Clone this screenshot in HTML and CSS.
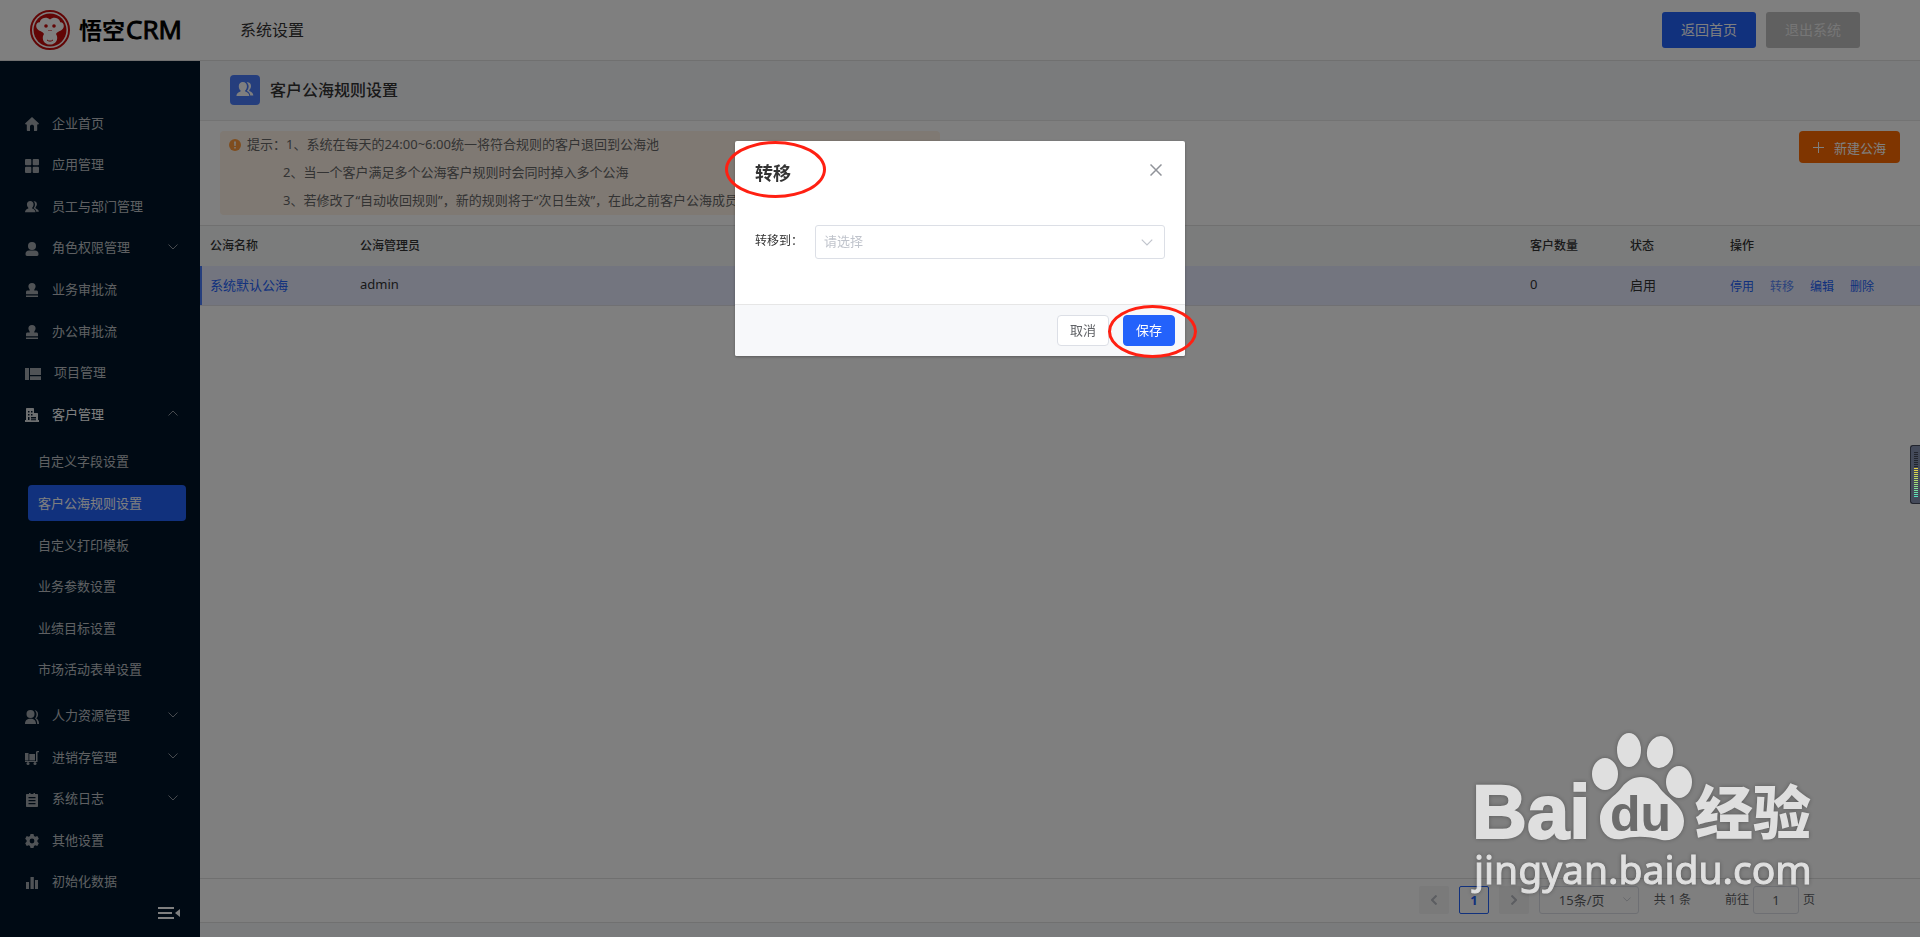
FILE: index.html
```html
<!DOCTYPE html>
<html lang="zh-CN">

<head>
    <meta charset="UTF-8">
    <title>系统设置 - 悟空CRM</title>
    <meta name="viewport" content="width=device-width, initial-scale=1.0">
    <link rel="stylesheet" href="styles.css">
</head>

<body>
    <!-- Shared icons -->
    <svg class="sprite" aria-hidden="true">
        <symbol id="i-down" viewBox="0 0 10 6"><path d="M.5.5 5 5 9.500.5" fill="none" stroke="currentColor"/></symbol>
        <symbol id="i-users" viewBox="0 0 16 14">
            <path d="M6 0c2.300 0 3.800 1.600 3.800 3.900 0 1.700-.6 3-1.600 3.900v1c2.400.8 3.800 2 3.800 4.200H0c0-2.200 1.400-3.400 3.800-4.200v-1C2.800 6.900 2.200 5.600 2.200 3.900 2.200 1.600 3.700 0 6 0z"/>
            <path d="M9.600.4c2.400-.4 4 1.100 4 3.300 0 1.600-.7 2.900-1.600 3.600v1.100c2.200.9 3.700 2 3.800 4.100h-2.900c-.2-2-1.200-3.200-3-4.100V8c1-1 1.500-2.300 1.500-4 0-1.500-.7-2.800-1.800-3.600z"/>
        </symbol>
        <symbol id="i-stamp" viewBox="0 0 14 14"><path d="M7 0a3.600 3.600 0 0 1 3.600 3.600c0 1.600-1.400 2.300-1.400 3.900h2.300c.9 0 1.500.6 1.500 1.500v2.300H1V9c0-.9.6-1.500 1.500-1.500h2.300c0-1.600-1.400-2.300-1.400-3.900A3.600 3.600 0 0 1 7 0zM1 12.600h12V14H1z"/></symbol>
    </svg>

    <div class="app">
        <header class="topbar">
            <a class="logo" href="#">
                <svg width="40" height="40" viewBox="0 0 40 40">
                    <circle cx="20" cy="20" r="19" fill="#fff" stroke="#c40d0d" stroke-width="2"/>
                    <circle cx="20" cy="20" r="16.500" fill="#c40d0d"/>
                    <path d="M20 9.500c2-1.800 5-2.200 7.500-1 1.500.8 2.500 2.200 2.700 3.800 2.500-.1 3.800 1.700 3.600 3.900-.2 2.300-2 4.300-4.600 5-1 .4-2.500 1.500-3.200 2.800.8 1.200 1.300 2.800 1.200 4.200-.3 4-3.400 6.300-7.200 6.300s-6.900-2.300-7.200-6.300c-.1-1.400.4-3 1.200-4.200-.7-1.300-2.200-2.400-3.200-2.800-2.600-.7-4.400-2.700-4.600-5-.2-2.200 1.100-4 3.600-3.900.2-1.600 1.200-3 2.700-3.800 2.500-1.200 5.500-.8 7.500 1z" fill="#fff"/>
                    <circle cx="16" cy="16" r="1.800" fill="#c40d0d"/>
                    <circle cx="24" cy="16" r="1.800" fill="#c40d0d"/>
                    <path d="M18.500 20.500h1M20.500 20.500h1M17 30c2 1.500 4 1.500 6 0" fill="none" stroke="#c40d0d"/>
                </svg>
                <span class="logo-cn">悟空</span><span class="logo-en">CRM</span>
            </a>
            <span class="topbar-title">系统设置</span>
            <button class="btn-top primary">返回首页</button>
            <button class="btn-top muted">退出系统</button>
        </header>

        <div class="body">
            <aside class="sidebar">
                <ul class="menu">
                    <li><a href="#"><svg class="icon" viewBox="0 0 14 14"><path d="M7 0l7 6.500-1 1.300-.8-.5V13c0 .6-.4 1-1 1H9V9.500C9 8.400 8.100 7.800 7 7.800s-2 .6-2 1.700V14H2.800c-.6 0-1-.4-1-1V7.300l-.8.5-1-1.300z"/></svg>企业首页</a></li>
                    <li><a href="#"><svg class="icon" viewBox="0 0 14 14"><rect width="6.300" height="6.300" rx="1"/><rect x="7.700" width="6.300" height="6.300" rx="1"/><rect y="7.700" width="6.300" height="6.300" rx="1"/><rect x="7.700" y="7.700" width="6.300" height="6.300" rx="1"/></svg>应用管理</a></li>
                    <li><a href="#"><svg class="icon"><use href="#i-users"/></svg>员工与部门管理</a></li>
                    <li><a href="#"><svg class="icon" viewBox="0 0 14 14"><circle cx="7" cy="4" r="4"/><path d="M4 8.500h6c2.200 0 3.500 1.500 3.500 3.500 0 1.300-.5 2-1.500 2H2C1 14 .5 13.300.5 12c0-2 1.300-3.500 3.500-3.500z"/></svg>角色权限管理<svg class="arrow"><use href="#i-down"/></svg></a></li>
                    <li><a href="#"><svg class="icon"><use href="#i-stamp"/></svg>业务审批流</a></li>
                    <li><a href="#"><svg class="icon"><use href="#i-stamp"/></svg>办公审批流</a></li>
                    <li><a href="#"><svg class="icon wide" viewBox="0 0 16 14"><path d="M0 1h4v12H0zM5 1h11v7H5zM5 9.300h11V13H5z"/></svg>项目管理</a></li>
                    <li class="open">
                        <a href="#"><svg class="icon" viewBox="0 0 14 14"><path fill-rule="evenodd" d="M1 1c0-.6.400-1 1-1h6c.600 0 1 .4 1 1v4h3c.600 0 1 .4 1 1v6h1v2H0v-2h1zm2 2v1.500h1.500V3zm3 0v1.500h1.500V3zM3 6v1.500h1.500V6zm3 0v1.500h1.500V6zM3 9v3h1.500V9zm3 0v1.500h5V9zm0 2.300v1h5v-1z"/></svg>客户管理<svg class="arrow up"><use href="#i-down"/></svg></a>
                    </li>
                    <li class="group">
                        <ul class="submenu">
                            <li><a href="#">自定义字段设置</a></li>
                            <li><a href="#" class="active">客户公海规则设置</a></li>
                            <li><a href="#">自定义打印模板</a></li>
                            <li><a href="#">业务参数设置</a></li>
                            <li><a href="#">业绩目标设置</a></li>
                            <li><a href="#">市场活动表单设置</a></li>
                        </ul>
                    </li>
                    <li><a href="#"><svg class="icon" viewBox="0 0 14 14"><circle cx="5.500" cy="4" r="4"/><path d="M0 14c0-3.400 2-5.200 5.500-5.200S11 10.600 11 14zM9.500.3C11.700.3 13 2 13 4.200s-1 3.600-2 4c2 .8 3 3 3 5.800h-1.800c0-2.400-.7-4.400-2.200-5.500 1-1.200 1.500-2.600 1.500-4.300S10.800 1.300 9.500.3z"/></svg>人力资源管理<svg class="arrow"><use href="#i-down"/></svg></a></li>
                    <li><a href="#"><svg class="icon" viewBox="0 0 14 14"><path d="M0 2h3.500v7.500H0zM4.300 3H10v6.500H4.300zM11 1.500C11 .5 11.700 0 12.500 0H14v1.300h-1.500V11H0V10h11z"/><circle cx="3" cy="12.500" r="1.500"/><circle cx="10" cy="12.500" r="1.500"/></svg>进销存管理<svg class="arrow"><use href="#i-down"/></svg></a></li>
                    <li><a href="#"><svg class="icon" viewBox="0 0 14 14"><path fill-rule="evenodd" d="M4 0h1.500v1h3V0H10v1h2c.6 0 1 .4 1 1v11c0 .6-.4 1-1 1H2c-.600 0-1-.4-1-1V2c0-.6.400-1 1-1h2zM3.500 4v1.200h7V4zm0 3v1.200h7V7zm0 3v1.200h7V10z"/></svg>系统日志<svg class="arrow"><use href="#i-down"/></svg></a></li>
                    <li><a href="#"><svg class="icon" viewBox="0 0 14 14"><path fill-rule="evenodd" d="M5.500 0h3l.5 2 1.300.7 2-.6 1.500 2.600L12.400 6.200v1.600l1.400 1.500-1.500 2.600-2-.6-1.300.7-.5 2h-3l-.5-2-1.300-.7-2 .6L.2 9.300l1.400-1.500V6.200L.2 4.700l1.500-2.600 2 .6L5 2zM7 4.600a2.400 2.400 0 1 0 0 4.800 2.400 2.400 0 0 0 0-4.800z"/></svg>其他设置</a></li>
                    <li><a href="#"><svg class="icon" viewBox="0 0 14 14"><path d="M1 6h3v7H1zM5.500 1h3.300v12H5.500zM10 4h3v9h-3z"/></svg>初始化数据</a></li>
                </ul>
                <button class="collapse" aria-label="收起菜单">
                    <svg width="22" height="12" viewBox="0 0 22 12" fill="#fff"><path d="M0 0h16v2H0zM0 5h14v2H0zM0 10h16v2H0zM22 2v8l-5-4z"/></svg>
                </button>
            </aside>

            <main class="main">
                <div class="page-head">
                    <span class="page-icon"><svg width="18" height="15"><use href="#i-users"/></svg></span>
                    <h1>客户公海规则设置</h1>
                </div>

                <div class="panel">
                    <div class="tips-row">
                        <div class="tips">
                            <svg width="12" height="12" viewBox="0 0 12 12"><circle cx="6" cy="6" r="6" fill="#ff9a3c"/><path d="M5 2.500h2L6.700 7H5.300zM5.200 8h1.600v1.500H5.200z" fill="#fff3e6"/></svg>
                            <div class="tips-text">
                                <p>提示：1、系统在每天的24:00~6:00统一将符合规则的客户退回到公海池</p>
                                <p class="indent">2、当一个客户满足多个公海客户规则时会同时掉入多个公海</p>
                                <p class="indent">3、若修改了“自动收回规则”，新的规则将于“次日生效”，在此之前客户公海成员仍</p>
                            </div>
                        </div>
                        <button class="btn-new"><svg width="11" height="11" viewBox="0 0 11 11"><path d="M5.500 0v11M0 5.500h11" stroke="#fff"/></svg>新建公海</button>
                    </div>

                    <table class="data">
                        <colgroup>
                            <col class="c-name"><col><col class="c-num"><col class="c-num"><col class="c-act">
                        </colgroup>
                        <thead>
                            <tr>
                                <th>公海名称</th>
                                <th>公海管理员</th>
                                <th>客户数量</th>
                                <th>状态</th>
                                <th>操作</th>
                            </tr>
                        </thead>
                        <tbody>
                            <tr>
                                <td><a href="#">系统默认公海</a></td>
                                <td>admin</td>
                                <td>0</td>
                                <td>启用</td>
                                <td>
                                    <div class="actions">
                                        <button>停用</button>
                                        <button class="focus">转移</button>
                                        <button>编辑</button>
                                        <button>删除</button>
                                    </div>
                                </td>
                            </tr>
                        </tbody>
                    </table>

                    <div class="pager">
                        <button class="pg" aria-label="上一页"><svg width="6" height="10" viewBox="0 0 6 10"><path d="M5.500.5 1 5l4.500 4.500"/></svg></button>
                        <button class="pg current">1</button>
                        <button class="pg" aria-label="下一页"><svg width="6" height="10" viewBox="0 0 6 10"><path d="M.5.5 5 5 .5 9.500"/></svg></button>
                        <div class="select size">
                            <select aria-label="每页条数">
                                <option>15条/页</option>
                            </select>
                            <svg width="8" height="5"><use href="#i-down"/></svg>
                        </div>
                        <span class="total">共 1 条</span>
                        <label for="goto">前往</label>
                        <input id="goto" type="text" value="1">
                        <span>页</span>
                    </div>
                </div>
            </main>
        </div>
    </div>

    <!-- Overlay + dialog -->
    <div class="overlay">
        <div class="dialog" role="dialog" aria-labelledby="dialogTitle">
            <div class="dialog-head">
                <h2 id="dialogTitle">转移</h2>
                <button class="close" aria-label="关闭"><svg width="12" height="12" viewBox="0 0 12 12"><path d="M.5.5l11 11M11.500.5l-11 11" stroke="#909399" stroke-width="1.500"/></svg></button>
            </div>
            <div class="dialog-body">
                <label for="owner">转移到：</label>
                <div class="select owner">
                    <select id="owner">
                        <option>请选择</option>
                    </select>
                    <svg width="12" height="7"><use href="#i-down"/></svg>
                </div>
            </div>
            <div class="dialog-foot">
                <button class="btn">取消</button>
                <button class="btn save">保存</button>
            </div>
            <span class="mark mark-title"></span>
            <span class="mark mark-save"></span>
        </div>
    </div>

    <div class="meter"></div>

    <svg class="watermark" width="350" height="170" viewBox="0 0 350 170">
        <g fill="#fff">
            <text class="wm-bai" x="2" y="105">Bai</text>
            <ellipse cx="135" cy="41" rx="13" ry="16"/>
            <ellipse cx="159" cy="17" rx="12" ry="17"/>
            <ellipse cx="190" cy="19" rx="13" ry="16" transform="rotate(10 190 19)"/>
            <ellipse cx="209" cy="49" rx="13" ry="16"/>
            <path d="M171 44c8 0 14 4 18 10 7 11 25 18 25 34 0 14-11 21-22 19-14-4-28-4-40-1-13 2-22-6-22-20 0-16 14-21 22-32 5-6 11-10 19-10z"/>
            <text class="wm-cn" x="225" y="101">经验</text>
            <text class="wm-url" x="4" y="151">jingyan.baidu.com</text>
        </g>
        <text class="wm-du" x="140" y="98">du</text>
    </svg>
</body>

</html>
```
FILE: styles.css
```css
* {
    margin: 0;
    padding: 0;
    box-sizing: border-box;
}

body {
    font-family: "Noto Sans", "Noto Sans CJK SC", sans-serif;
    font-size: 13px;
    color: #333;
    background-color: #f5f6f9;
}

a {
    text-decoration: none;
    color: inherit;
}

ul {
    list-style: none;
}

button,
input,
select {
    font-family: inherit;
    font-size: 13px;
    border: none;
    background: none;
    color: inherit;
}

button {
    cursor: pointer;
}

.sprite {
    position: absolute;
    width: 0;
    height: 0;
}

.app {
    min-height: 100vh;
    display: flex;
    flex-direction: column;
}

/* top bar */
.topbar {
    height: 61px;
    padding: 0 60px 0 30px;
    display: flex;
    align-items: center;
    gap: 10px;
    background-color: white;
    border-bottom: 1px solid #e0e0e0;
}

.logo {
    display: flex;
    align-items: center;
    width: 200px;
    color: black;
}

.logo-cn {
    margin-left: 9px;
    padding-bottom: 2px;
    font-size: 23px;
    font-weight: 700;
}

.logo-en {
    margin-left: 1px;
    padding-bottom: 2px;
    font-family: "Open Sans", sans-serif;
    font-size: 26px;
    -webkit-text-stroke: 1px black;
}

.topbar-title {
    flex: 1;
    padding-bottom: 2px;
    font-size: 16px;
}

.btn-top {
    width: 94px;
    height: 36px;
    padding-bottom: 2px;
    font-size: 14px;
    border-radius: 3px;
    color: white;
}

.primary {
    background-color: #2362fb;
}

.muted {
    background-color: #c0c0c0;
    color: #ececec;
}

.body {
    flex: 1;
    display: flex;
}

/* side menu */
.sidebar {
    width: 200px;
    flex-shrink: 0;
    display: flex;
    flex-direction: column;
    background-color: #001529;
    color: #bec1c5;
}

.menu {
    flex: 1;
    padding-top: 45px;
    display: flex;
    flex-direction: column;
    justify-content: space-between;
}

.menu a {
    display: flex;
    align-items: center;
    height: 36px;
    padding: 0 22px 4px 25px;
}

.icon {
    width: 14px;
    height: 14px;
    margin-top: 4px;
    margin-right: 13px;
    fill: currentColor;
    opacity: 0.85;
}

.icon.wide {
    width: 16px;
}

.arrow {
    width: 10px;
    height: 6px;
    margin-left: auto;
    color: #8f959c;
}

.arrow.up {
    transform: rotate(180deg);
}

.open {
    color: white;
}

.group,
.submenu {
    display: contents;
}

.submenu a {
    margin: 0 14px 0 28px;
    padding: 0 10px 2px;
    border-radius: 4px;
}

.submenu li:first-child {
    margin-top: 5px;
}

.submenu li:last-child {
    margin-bottom: 5px;
}

.submenu .active {
    background-color: #2362fb;
    color: white;
}

.collapse {
    height: 36px;
    padding: 6px 20px 0 0;
    display: flex;
    justify-content: flex-end;
}

/* content */
.main {
    flex: 1;
    min-width: 0;
    padding-bottom: 14px;
    display: flex;
    flex-direction: column;
}

.page-head {
    height: 59px;
    padding: 0 30px 2px;
    display: flex;
    align-items: center;
    gap: 10px;
}

.page-icon {
    width: 30px;
    height: 30px;
    display: flex;
    align-items: center;
    justify-content: center;
    border-radius: 4px;
    background-color: #4a7dfb;
    fill: white;
}

.page-head h1 {
    padding-bottom: 2px;
    font-size: 16px;
    font-weight: 500;
}

.panel {
    flex: 1;
    display: flex;
    flex-direction: column;
    background-color: white;
    border-top: 1px solid #e6e6e6;
    border-bottom: 1px solid #e0e0e0;
}

.tips-row {
    display: flex;
    justify-content: space-between;
    align-items: flex-start;
    padding: 10px 20px;
}

.tips {
    width: 720px;
    height: 84px;
    padding: 0 9px;
    display: flex;
    gap: 6px;
    border-radius: 4px;
    background-color: #fff3e6;
    color: #666;
}

.tips svg {
    flex-shrink: 0;
    margin-top: 8px;
}

.tips-text {
    margin-top: -1px;
}

.tips p {
    line-height: 28px;
    white-space: nowrap;
}

.tips .indent {
    padding-left: 36px;
}

.btn-new {
    width: 101px;
    height: 32px;
    display: flex;
    align-items: center;
    justify-content: center;
    gap: 10px;
    border-radius: 4px;
    background-color: #ff6a00;
    color: white;
}

.data {
    width: 100%;
    table-layout: fixed;
    border-collapse: collapse;
}

.c-name {
    width: 150px;
}

.c-num {
    width: 100px;
}

.c-act {
    width: 200px;
}

.data th,
.data td {
    height: 40px;
    padding: 0 10px 2px;
    text-align: left;
}

.data th {
    font-size: 12px;
    font-weight: 500;
    background-color: #f6f8f8;
    border-top: 1px solid #e0e0e0;
}

.data td {
    background-color: #e6ebff;
    border-bottom: 1px solid #e0e0e6;
}

.data td:first-child {
    box-shadow: inset 2px 0 #4a7dfb;
}

.data td a {
    color: #2362fb;
}

.actions {
    display: flex;
    gap: 16px;
    padding-top: 4px;
}

.actions button {
    font-size: 12px;
    color: #2362fb;
}

.actions .focus {
    color: #5a87f8;
}

.pager {
    margin-top: auto;
    height: 44px;
    padding: 0 105px 8px 0;
    display: flex;
    align-items: flex-end;
    justify-content: flex-end;
    line-height: 28px;
    font-size: 12px;
    border-top: 1px solid #e0e0e0;
    color: #606266;
}

.pg {
    width: 30px;
    height: 28px;
    margin-right: 10px;
    border-radius: 2px;
    background-color: #f4f4f5;
}

.pg path {
    fill: none;
    stroke: #b8bbc2;
    stroke-width: 2;
}

.current {
    background: none;
    border: 1px solid #2362fb;
    color: #2362fb;
    font-weight: 700;
}

.select {
    position: relative;
}

.select select {
    width: 100%;
    height: 100%;
    appearance: none;
    border: 1px solid #dcdfe6;
    border-radius: 3px;
}

.select svg {
    position: absolute;
    top: 50%;
    right: 12px;
    margin-top: -3px;
    color: #c0c4cc;
    pointer-events: none;
}

.size {
    width: 100px;
    height: 28px;
}

.size select {
    padding-left: 19px;
}

.size svg {
    right: 8px;
}

.total {
    margin: 0 34px 0 15px;
}

.pager input {
    width: 46px;
    height: 28px;
    margin: 0 4px;
    text-align: center;
    border: 1px solid #dcdfe6;
    border-radius: 3px;
}

/* dialog */
.overlay {
    position: fixed;
    inset: 0;
    padding-top: 141px;
    background-color: rgba(0, 0, 0, 0.5);
}

.dialog {
    position: relative;
    width: 450px;
    margin: 0 auto;
    border-radius: 2px;
    background-color: white;
    box-shadow: 0 1px 3px rgba(0, 0, 0, 0.3);
}

.dialog-head {
    display: flex;
    justify-content: space-between;
    align-items: flex-start;
    padding: 20px 20px 0;
}

.dialog-head h2 {
    font-size: 18px;
    line-height: 24px;
    font-weight: 700;
}

.close {
    padding: 3px;
    line-height: 0;
}

.dialog-body {
    display: flex;
    padding: 40px 20px 45px;
}

.dialog-body label {
    width: 60px;
    font-size: 12px;
    line-height: 32px;
}

.owner {
    flex: 1;
    height: 34px;
}

.owner select {
    padding-left: 8px;
    padding-bottom: 2px;
    color: #c0c4cc;
}

.dialog-foot {
    display: flex;
    justify-content: flex-end;
    gap: 14px;
    padding: 10px;
    background-color: #f7f8fa;
    border-top: 1px solid #e6e6e6;
    border-radius: 0 0 2px 2px;
}

.btn {
    width: 52px;
    height: 31px;
    padding-bottom: 2px;
    border: 1px solid #dcdfe6;
    border-radius: 4px;
    background-color: white;
    color: #606266;
}

.save {
    border-color: #2362fb;
    background-color: #2362fb;
    color: white;
}

/* red circles over the dialog */
.mark {
    position: absolute;
    border: 3px solid #ff2012;
    border-radius: 50%;
    pointer-events: none;
}

.mark-title {
    left: -10px;
    top: 0;
    width: 101px;
    height: 57px;
}

.mark-save {
    right: -12px;
    bottom: -2px;
    width: 89px;
    height: 53px;
}

/* level meter on the right edge */
.meter {
    position: fixed;
    right: 0;
    top: 445px;
    width: 10px;
    height: 59px;
    border: 1px solid #22252e;
    border-right: none;
    border-radius: 3px 0 0 3px;
    background-color: #444a5a;
}

.meter::before {
    content: "";
    position: absolute;
    left: 3px;
    top: 6px;
    width: 4px;
    height: 46px;
    background: repeating-linear-gradient(transparent 0 1px, #444a5a 1px 2px), linear-gradient(#22252e 0 34%, #f0d23c 34%, #a8dc70 65%, #4be3c8);
}

.watermark {
    position: fixed;
    right: 100px;
    bottom: 34px;
    opacity: 0.75;
    filter: drop-shadow(0 0 2px rgba(0, 0, 0, 0.4));
}

.wm-bai,
.wm-du {
    font-family: "Liberation Sans", sans-serif;
    font-weight: 700;
}

.wm-bai {
    font-size: 76px;
    stroke: white;
    stroke-width: 2px;
}

.wm-du {
    font-size: 50px;
    fill: #666;
}

.wm-cn {
    font-family: "Noto Sans CJK SC", sans-serif;
    font-size: 58px;
    font-weight: 900;
}

.wm-url {
    font-size: 39px;
    stroke: white;
    stroke-width: 1px;
}
```
